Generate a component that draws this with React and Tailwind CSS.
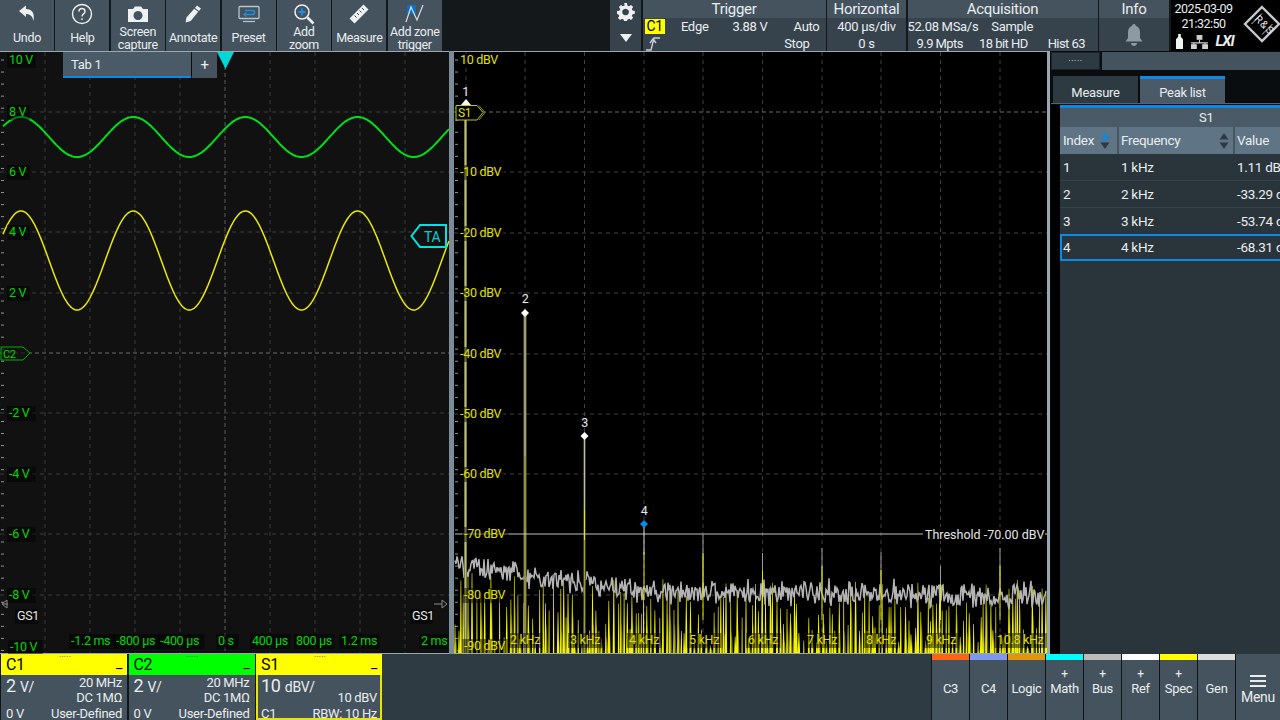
import React from "react";

function rng(seed) {
  let s = seed;
  return () => {
    s = (s * 1664525 + 1013904223) % 4294967296;
    return s / 4294967296;
  };
}

const sine = (cy, amp) => {
  const p = [];
  for (let x = 3; x <= 449; x += 1) {
    p.push(`${x},${(cy - amp * Math.cos(((x - 21) / 112.2) * 2 * Math.PI)).toFixed(1)}`);
  }
  return p.join(" ");
};

const peaks = [703, 762.5, 822, 881, 940.5, 1000];
const peakTop = { 703: 535, 762.5: 553, 822: 548, 881: 552, 940.5: 566, 1000: 548 };

function noiseLine() {
  const r = rng(11);
  const p = [];
  for (let x = 455; x <= 1046; x += 1) {
    const base = x < 650 ? 566 + ((x - 455) / 195) * 26 : 592 + ((x - 650) / 396) * 5;
    const spike = r() < 0.12 ? -9 * r() : 0;
    p.push(`${x.toFixed(1)},${(base + spike + (r() - 0.5) * 20 + (r() - 0.5) * 7).toFixed(1)}`);
  }
  return p.join(" ");
}

function yellowNoise() {
  const r = rng(77);
  let bright = "";
  let olive = "";
  for (let x = 455; x <= 1046; x += 1.8 + r() * 3.2) {
    const lim = x < 530 ? 92 : 68;
    const h = 8 + Math.pow(r(), 1.1) * lim;
    const t = (654 - h).toFixed(1);
    const w = 0.6 + r() * 0.7;
    bright += `M${(x - w).toFixed(1)} 654L${(x - 0.3).toFixed(1)} ${t}L${(x + 0.3).toFixed(1)} ${t}L${(x + w).toFixed(1)} 654Z`;
    if (r() < 0.55) {
      const h2 = h * (0.35 + r() * 0.45);
      olive += `M${(x - 1.5).toFixed(1)} 654L${(x + 1).toFixed(1)} ${(654 - h2).toFixed(1)}L${(x + 2.5).toFixed(1)} 654Z`;
    }
  }
  return { bright, olive };
}

const NOISE = noiseLine();
const YEL = yellowNoise();

function Btn({ children, label, second }) {
  return (
    <div className="flex h-[51px] w-[54px] shrink-0 flex-col items-center bg-[#45535e] text-[#e9edf0]">
      <div className="flex h-[26px] items-center justify-center pt-[1px]">{children}</div>
      <div className={`text-center text-[12.5px] leading-[12.5px] ${second ? "" : "pt-[6px]"}`}>
        {label}
        {second && <br />}
        {second}
      </div>
    </div>
  );
}

function TopButtons() {
  return (
    <div className="flex w-[441px] gap-[1.4px]">
      <Btn label="Undo">
        <svg width="20" height="20" viewBox="0 0 20 20"><path d="M2 7 L9 1.5 V5 C15 5 18 9 16.5 17 C15.5 12 13 10 9 10 V13 Z" fill="#eef1f3" /></svg>
      </Btn>
      <Btn label="Help">
        <svg width="22" height="22" viewBox="0 0 22 22" fill="none" stroke="#eef1f3" strokeWidth="1.4"><circle cx="11" cy="11" r="9.5" /><path d="M8 8.5c0-4 6-4 6 0 0 2.5-3 2.2-3 5" /><path d="M11 15.3v1.6" /></svg>
      </Btn>
      <Btn label="Screen" second="capture">
        <svg width="22" height="18" viewBox="0 0 22 18"><path fillRule="evenodd" d="M1 4h5l2-2.5h6L16 4h5v13H1ZM11 6a4.5 4.5 0 1 0 .01 0Z" fill="#eef1f3" /></svg>
      </Btn>
      <Btn label="Annotate">
        <svg width="20" height="20" viewBox="0 0 20 20"><path d="M14 1.5l4 3-2 2.5-4-3ZM11.2 4.8l4 3-7.5 9.2-5 1.5.6-4.8Z" fill="#eef1f3" /></svg>
      </Btn>
      <Btn label="Preset">
        <svg width="22" height="18" viewBox="0 0 22 18" fill="none"><rect x="1" y="1.5" width="20" height="12" rx="1" stroke="#b9c4cc" strokeWidth="1.3" /><path d="M5 16.5h12" stroke="#b9c4cc" strokeWidth="1.3" /><path d="M7 5.5h8c2 0 2 4 0 4H7" stroke="#1a8fe8" strokeWidth="1.6" /><path d="M8.5 7.5L6 9.5l2.5 2" stroke="#1a8fe8" strokeWidth="1.3" /></svg>
      </Btn>
      <Btn label="Add" second="zoom">
        <svg width="22" height="22" viewBox="0 0 22 22" fill="none"><circle cx="9" cy="9" r="7" stroke="#eef1f3" strokeWidth="1.5" /><path d="M9 5.5v7M5.5 9h7" stroke="#1a8fe8" strokeWidth="1.8" /><path d="M14.5 14.5l6 6" stroke="#eef1f3" strokeWidth="2.6" /></svg>
      </Btn>
      <Btn label="Measure">
        <svg width="22" height="22" viewBox="0 0 22 22"><path d="M15.5 1.5l5 5L6.5 20.5l-5-5Z" fill="#eef1f3" /><path d="M14 5l2 2M11.5 7.5l2 2M9 10l2 2M6.5 12.5l2 2" stroke="#45535e" strokeWidth="1" /></svg>
      </Btn>
      <Btn label="Add zone" second="trigger">
        <svg width="22" height="22" viewBox="0 0 22 22" fill="none"><rect x="3" y="2" width="9" height="9" fill="#0b6fc4" /><path d="M2 19L7 4l6 13 6-15" stroke="#d8dee2" strokeWidth="1.2" /></svg>
      </Btn>
    </div>
  );
}

function Section({ title, w, children }) {
  return (
    <div className={`flex h-[51px] shrink-0 flex-col bg-[#36434d] ${w}`}>
      <div className="flex h-[18px] shrink-0 items-center justify-center bg-[#45535e] pt-[1px] text-[15px] leading-none text-[#e9edf0]">{title}</div>
      <div className="relative min-h-0 flex-1 text-[13px] leading-[17px] text-[#e9edf0]">{children}</div>
    </div>
  );
}

function StatusBar() {
  return (
    <div className="flex gap-[1.5px]">
      <div className="flex h-[51px] w-[31px] shrink-0 flex-col items-center bg-[#36434d] pt-[3px]">
        <svg width="18" height="18" viewBox="0 0 18 18"><path fillRule="evenodd" d="M7.5 0h3l.4 2.5 1.8.8L14.8 2 17 4.2l-1.4 2 .8 1.8 2.4.4v3l-2.4.4-.8 1.8 1.4 2L14.8 18l-2.1-1.3-1.8.8-.4 2.4h-3l-.4-2.4-1.8-.8L3.2 18 1 15.8l1.4-2-.8-1.8L0 11.5v-3l2.6-.4.8-1.9L2 4.2 4.2 2l2 1.3 1.9-.8ZM9 6a3.5 3.5 0 1 0 .01 0Z" fill="#eef1f3" transform="scale(.95)" /></svg>
        <svg className="mt-[13px]" width="12" height="8" viewBox="0 0 12 8"><path d="M0 0h12L6 8Z" fill="#eef1f3" /></svg>
      </div>
      <Section title="Trigger" w="w-[183px]">
        <div className="flex h-[17px] items-center">
          <span className="ml-[2px] h-[15px] bg-[#ffff00] px-[2px] text-[14px] leading-[15px] text-black">C1</span>
          <span className="ml-[16px]">Edge</span>
          <span className="ml-[24px]">3.88 V</span>
          <span className="ml-[26px]">Auto</span>
        </div>
        <div className="flex h-[16px] justify-between pr-[16px]">
          <svg className="ml-[3px] mt-[1px]" width="14" height="15" viewBox="0 0 14 15" fill="none" stroke="#c9d1d7" strokeWidth="1.4"><path d="M0 14h5L8 2h6" /><path d="M4 7l3-4 3 4" /></svg>
          <span>Stop</span>
        </div>
      </Section>
      <Section title="Horizontal" w="w-[79px]">
        <div className="text-center">400 µs/div</div>
        <div className="text-center">0 s</div>
      </Section>
      <Section title="Acquisition" w="w-[190px]">
        <div className="flex h-[17px]">
          <span>52.08 MSa/s</span>
          <span className="ml-[13px]">Sample</span>
        </div>
        <div className="flex h-[16px] pl-[9px] tracking-[-0.55px]">
          <span>9.9 Mpts</span>
          <span className="ml-[16px]">18 bit HD</span>
          <span className="ml-[20px]">Hist 63</span>
        </div>
      </Section>
      <Section title="Info" w="w-[70px]">
        <div className="flex h-full items-center justify-center pt-[1px]">
          <svg width="18" height="22" viewBox="0 0 18 22"><path d="M9 0c1.2 0 1.7.8 1.7 1.8 3 .8 4.3 3.4 4.3 6.5V14l2.5 3.5H.5L3 14V8.300C3 5.200 4.300 2.600 7.300 1.800 7.300.8 7.800 0 9 0Z" fill="#8e9aa3" /><path d="M6 19h6c0 4-6 4-6 0Z" fill="#8e9aa3" /></svg>
        </div>
      </Section>
      <div className="relative h-[51px] flex-1 bg-black text-[12.5px] leading-[15px] tracking-[-0.5px] text-[#e9edf0]">
        <div className="w-[66px] pt-[1px] text-center">2025-03-09</div>
        <div className="w-[66px] text-center">21:32:50</div>
        <div className="flex items-center gap-[8px] pl-[5px] pt-[3px]">
          <svg width="7" height="15" viewBox="0 0 8 17"><path d="M2.5 0h3v3L8 6v11H0V6l2.5-3Z" fill="#f2f2f2" /></svg>
          <svg width="17" height="14" viewBox="0 0 18 15" fill="none" stroke="#d0d0d0" strokeWidth="1.2"><rect x="6.5" y=".5" width="5" height="4" fill="#d0d0d0" /><path d="M0 8.5h18M9 5v4M3 8v3M15 8v3" /><rect x=".5" y="10.5" width="5" height="4" fill="#d0d0d0" /><rect x="12.5" y="10.5" width="5" height="4" fill="#d0d0d0" /></svg>
          <span className="text-[15px] font-bold italic leading-none tracking-[-1px]">LXI</span>
        </div>
        <svg className="absolute right-[-1px] top-[5px]" width="38" height="38" viewBox="0 0 38 38" fill="none" stroke="#c4c8cb">
          <path d="M19 2 36 19 19 36 2 19Z" strokeWidth="2.4" />
          <path d="M8.5 19 19 8.5M19 29.5 29.5 19" strokeWidth="1" />
          <text fontSize="10.5" fill="#e8e8e8" stroke="none" textAnchor="middle" transform="translate(13 16.5) rotate(45)" fontFamily="Roboto, sans-serif">R</text>
          <text fontSize="10.5" fill="#e8e8e8" stroke="none" textAnchor="middle" transform="translate(18.5 22) rotate(45)" fontFamily="Roboto, sans-serif">&amp;</text>
          <text fontSize="10.5" fill="#e8e8e8" stroke="none" textAnchor="middle" transform="translate(24 27.5) rotate(45)" fontFamily="Roboto, sans-serif">S</text>
        </svg>
      </div>
    </div>
  );
}

function Ticks({ x }) {
  const t = [];
  for (let y = 60; y < 654; y += 12.05) t.push(y);
  return t.map((y) => <path key={y} d={`M${x} ${y}h3`} stroke="#8c979f" strokeWidth="1" />);
}

function Label({ x, y, children, color, w }) {
  const width = w ?? String(children).length * 5.9 + 5;
  return (
    <g>
      <rect x={x - 2} y={y - 11} width={width} height={15} fill="#000" fillOpacity="0.45" />
      <text x={x} y={y} fill={color} fontSize="12.5">{children}</text>
    </g>
  );
}

const G = "#00d800";

function LeftPlot() {
  const volts = [[64, "10 V", 9], [116, "8 V", 9], [176, "6 V", 9], [236, "4 V", 9], [297, "2 V", 9], [417, "-2 V", 9], [478, "-4 V", 9], [538, "-6 V", 9], [599, "-8 V", 9], [651, "-10 V", 10]];
  const times = [[71, "-1.2 ms"], [116, "-800 µs"], [160, "-400 µs"], [218, "0 s"], [252, "400 µs"], [296, "800 µs"], [341, "1.2 ms"], [421, "2 ms"]];
  return (
    <div className="relative h-[603px] w-[449px] shrink-0 border-t border-[#9aa7b0] bg-[#111111]">
      <svg className="block" width="449" height="602" viewBox="0 52 449 602" fontFamily="Roboto, sans-serif">
        {[45, 90, 135, 180, 270, 315, 360, 405].map((x) => (
          <path key={x} d={`M${x} 52V654`} stroke="#3c3c3c" strokeWidth="1" strokeDasharray="4 4" />
        ))}
        <path d="M225 52V654" stroke="#5c5c5c" strokeWidth="1" strokeDasharray="4 3" />
        {[112, 172, 232, 293, 413, 474, 534, 595].map((y) => (
          <path key={y} d={`M0 ${y}H449`} stroke="#3c3c3c" strokeWidth="1" strokeDasharray="4 4" />
        ))}
        <path d="M0 353H449" stroke="#6c6c6c" strokeWidth="1" strokeDasharray="4 3" />
        <path d="M0 653.5H449" stroke="#9aa7b0" strokeWidth="1" />
        <Ticks x={1} />
        <polyline points={sine(137, 20)} fill="none" stroke="#00e018" strokeWidth="2" />
        <polyline points={sine(260.5, 49.5)} fill="none" stroke="#eaea00" strokeWidth="1.5" />
        {volts.map(([y, t, x]) => <Label key={t} x={x} y={y} color={G}>{t}</Label>)}
        {times.map(([x, t]) => <Label key={t} x={x} y={645} color={G}>{t}</Label>)}
        <path d="M2 604h6M7 600l-5 4 5 4z" stroke="#8a8a8a" fill="none" />
        <path d="M434 604h8M442 600l5 4-5 4z" stroke="#8a8a8a" fill="none" />
        <Label x={17} y={620} color="#e6e6e6">GS1</Label>
        <Label x={412} y={620} color="#e6e6e6">GS1</Label>
        <path d="M1 347H23L30 353L23 360H1Z" fill="#111" fillOpacity=".7" stroke="#00b000" strokeWidth="1" />
        <text x="3" y="357.5" fontSize="11" fill={G}>C2</text>
        <path d="M446 225H420L411.5 236L420 247H446Z" fill="#111" stroke="#00e4e4" strokeWidth="2" />
        <text x="424" y="241.5" fontSize="14" fill="#00cfcf">TA</text>
        <path d="M217 52H234L225.5 69Z" fill="#00d8d8" />
      </svg>
      <div className="absolute left-[63px] top-0 flex h-[26px] bg-[#0a0c0e] text-[13px] text-[#e9edf0]">
        <div className="flex w-[128px] items-center border-b-[2px] border-[#0a8ae6] bg-[#4a5a66] pl-[8px] pt-[2px]">Tab 1</div>
        <div className="ml-px flex w-[25px] items-center justify-center bg-[#45535e] pt-[1px] text-[15px]">+</div>
      </div>
    </div>
  );
}

function RightPlot() {
  const dbv = [[64, "10 dBV", 460], [176, "-10 dBV", 460], [237, "-20 dBV", 460], [297, "-30 dBV", 460], [358, "-40 dBV", 460], [418, "-50 dBV", 460], [478, "-60 dBV", 460], [538, "-70 dBV", 464], [599, "-80 dBV", 464], [650, "-90 dBV", 464]];
  const freq = [[510, "2 kHz"], [570, "3 kHz"], [629, "4 kHz"], [689, "5 kHz"], [748, "6 kHz"], [807, "7 kHz"], [866, "8 kHz"], [926, "9 kHz"], [997, "10.8 kHz"]];
  const Y = "#e0e000";
  return (
    <div className="relative h-[603px] w-[596px] shrink-0 border-r-[3px] border-t border-[#9aa7b0] bg-black">
      <svg className="block" width="593" height="602" viewBox="454 52 593 602" fontFamily="Roboto, sans-serif">
        {[466, 525, 584.5, 644, 703, 762.5, 822, 881, 940.5, 1000].map((x) => (
          <path key={x} d={`M${x} 52V654`} stroke="#404040" strokeWidth="1" strokeDasharray="4 4" />
        ))}
        {[172, 233, 293, 354, 414, 474, 595].map((y) => (
          <path key={y} d={`M454 ${y}H1047`} stroke="#404040" strokeWidth="1" strokeDasharray="4 4" />
        ))}
        <path d="M454 112H1047" stroke="#6c6c6c" strokeWidth="1" strokeDasharray="4 3" />
        <Ticks x={455} />
        <path d={YEL.olive} fill="#5e5e10" />
        <path d={YEL.bright} fill="#f4f400" />
        <polyline points={NOISE} fill="none" stroke="#b4b4b4" strokeWidth="1.5" />
        <path d="M465.5 105V654" stroke="#7a7a4a" strokeWidth="3" />
        <path d="M465.5 105V654" stroke="#bcbc80" strokeWidth="1" />
        <path d="M525 313V654" stroke="#72724a" strokeWidth="3" />
        <path d="M525 313V456" stroke="#c4c4aa" strokeWidth="1" />
        <path d="M525 456V654" stroke="#b0b040" strokeWidth="1" />
        <path d="M584.5 436V654" stroke="#4e4e32" strokeWidth="2.5" />
        <path d="M584.5 436V510" stroke="#c0c0b0" strokeWidth="1" />
        <path d="M584.5 510V540" stroke="#e8e800" strokeWidth="1" />
        <path d="M584.5 540V654" stroke="#a0a030" strokeWidth="1" />
        <path d="M644 524V555" stroke="#d8d8d8" strokeWidth="1" />
        <path d="M644 552V600" stroke="#e8e800" strokeWidth="1" />
        {peaks.map((x) => (
          <g key={x}>
            <path d={`M${x} ${peakTop[x]}V590`} stroke="#9c9c9c" strokeWidth="1" />
            <path d={`M${x} ${peakTop[x] + 18}V620`} stroke="#e8e800" strokeWidth="1" />
          </g>
        ))}
        <path d="M455 534H1047" stroke="#c0c0c0" strokeWidth="1" />
        <rect x="923" y="527" width="122" height="14" fill="#000" />
        <text x="925" y="539" fill="#e4e4e4" fontSize="12.5" letterSpacing="0">Threshold -70.00 dBV</text>
        {dbv.map(([y, t, x]) => <Label key={t} x={x} y={y} color={Y}>{t}</Label>)}
        {freq.map(([x, t]) => <Label key={t} x={x} y={644} color={Y}>{t}</Label>)}
        <text x="465.5" y="96" fill="#e6e6e6" fontSize="12.5" textAnchor="middle">1</text>
        <path d="M461 105L466 99L471 105Z" fill="#fff" />
        <path d="M456 105.5H477L483 112.5L477 120H456Z" fill="#000" stroke="#c8c800" strokeWidth="1" />
        <path d="M479 105.5L485 112.5L479 120" fill="none" stroke="#8d8d20" strokeWidth="1" />
        <text x="458" y="117" fill={Y} fontSize="12">S1</text>
        <text x="525" y="303" fill="#e6e6e6" fontSize="12.5" textAnchor="middle">2</text>
        <path d="M525 309l4 4-4 4-4-4Z" fill="#fff" />
        <text x="584.5" y="427" fill="#e6e6e6" fontSize="12.5" textAnchor="middle">3</text>
        <path d="M584.5 432l4 4-4 4-4-4Z" fill="#fff" />
        <text x="644" y="515" fill="#e6e6e6" fontSize="12.5" textAnchor="middle">4</text>
        <path d="M644 520l4 4-4 4-4-4Z" fill="#0a8ae6" />
        <path d="M454 653.5H1047" stroke="#9aa7b0" strokeWidth="1" />
      </svg>
    </div>
  );
}

function Sort({ active }) {
  return (
    <svg width="10" height="18" viewBox="0 0 10 18">
      <path d="M5 1l4.5 6.5h-9Z" fill={active ? "#0a8ae6" : "#2e3a42"} />
      <path d="M5 17l4.5-6.5h-9Z" fill="#2e3a42" />
    </svg>
  );
}

function SidePanel() {
  const rows = [["1", "1 kHz", "1.11 dB"], ["2", "2 kHz", "-33.29 d"], ["3", "3 kHz", "-53.74 d"], ["4", "4 kHz", "-68.31 d"]];
  return (
    <div className="flex h-[603px] min-w-0 flex-1 flex-col overflow-hidden bg-[#0a0d0f] pl-[1px] text-[#e9edf0]">
      <div className="flex h-[19px] gap-[2px] pt-[1px]">
        <div className="flex w-[49px] items-center justify-center border border-[#1c2328] bg-[#2e3a42] pb-[6px] text-[9px] leading-none tracking-[0.5px]">.....</div>
        <div className="flex-1 bg-[#45535e]" />
      </div>
      <div className="mt-[6px] flex h-[28px] gap-[2px] border-b border-[#55636e] pl-[2px] text-[13px]">
        <div className="flex w-[85px] items-center justify-center bg-[#2e3a42] pt-[7px]">Measure</div>
        <div className="flex w-[85px] items-center justify-center border-t-[3px] border-[#0a8ae6] bg-[#4a5a66] pt-[4px]">Peak list</div>
      </div>
      <div className="flex min-w-0 flex-1 pt-[1px]">
        <div className="w-[9px] shrink-0 bg-black" />
        <div className="flex min-w-0 flex-1 flex-col overflow-hidden bg-[#2a343b] text-[13.5px]">
          <div className="flex h-[22px] items-center border-t-[3px] border-[#0a8ae6] bg-[#4a5a66] pl-[139px] text-[13px]">S1</div>
          <div className="grid h-[27px] grid-cols-[57px_116px_1fr] bg-[#5f7484] leading-[27px]">
            <div className="flex items-center justify-between pl-[3px]">Index<span className="mr-[7px] flex"><Sort active /></span></div>
            <div className="flex items-center justify-between border-l-2 border-[#46565f] pl-[2px]">Frequency<span className="mr-[4px] flex"><Sort /></span></div>
            <div className="border-l-2 border-[#46565f] pl-[2px]">Value</div>
          </div>
          {rows.map((r, i) =>
            i === 3 ? (
              <div key={r[0]} className="mt-[-1px] grid h-[27px] grid-cols-[58px_116px_1fr] border-2 border-r-0 border-[#0a8ae6] leading-[23px]">
                <div className="pl-[1px]">{r[0]}</div>
                <div className="pl-px">{r[1]}</div>
                <div className="pl-px">{r[2]}</div>
              </div>
            ) : (
              <div key={r[0]} className="grid h-[27px] grid-cols-[60px_116px_1fr] border-b border-[#35424b] leading-[27px]">
                <div className="pl-[3px]">{r[0]}</div>
                <div className="pl-px">{r[1]}</div>
                <div className="pl-px">{r[2]}</div>
              </div>
            )
          )}
        </div>
      </div>
    </div>
  );
}

function Card({ name, color, volts, unit, r1, r2, left, right, active }) {
  return (
    <div className="flex h-[66px] w-[126px] shrink-0 flex-col">
      <div className={`relative flex h-[21px] shrink-0 items-center pl-[5px] text-[16px] text-black ${color}`}>
        <span>{name}</span>
        <span className="absolute left-[58px] top-[-3px] text-[8px] leading-none tracking-[0.3px] text-[#333]">.....</span>
        <span className="absolute right-[5px] top-[-1px] text-[14px] leading-[20px]">_</span>
      </div>
      <div className={`min-h-0 flex-1 bg-[#45535e] text-[13px] leading-[15px] text-[#e9edf0] ${active ? "border-x-2 border-b-2 border-[#e6e600] pl-[3px] pr-[3px]" : "px-[5px]"}`}>
        <div className="flex h-[15px] justify-between">
          <span className="text-[18px] leading-[22px]">{volts} <span className="text-[14px]">{unit}</span></span>
          <span>{r1}</span>
        </div>
        <div className="h-[15px] text-right">{r2}</div>
        <div className="flex h-[15px] justify-between pt-px">
          <span>{left}</span>
          <span>{right}</span>
        </div>
      </div>
    </div>
  );
}

function TopTile({ color, plus, label }) {
  return (
    <div className="flex h-[66px] w-[37px] shrink-0 flex-col bg-[#45535e] text-[13px] leading-[15px] text-[#e9edf0]">
      <div className={`h-[6px] ${color}`} />
      <div className={`flex flex-1 flex-col items-center ${plus ? "pt-[7px]" : "pt-[21px]"}`}>
        {plus && <div className="h-[14px] text-[12px] leading-[14px]">+</div>}
        <div>{label}</div>
      </div>
    </div>
  );
}

function BottomBar() {
  return (
    <div className="flex h-[66px] bg-[#2f3b43]">
      <div className="flex w-[382px] shrink-0 gap-[1.5px] bg-[#11161a] pl-[1px]">
        <Card name="C1" color="bg-[#ffff00]" volts="2" unit="V/" r1="20 MHz" r2="DC 1MΩ" left="0 V" right="User-Defined" />
        <Card name="C2" color="bg-[#00ff00]" volts="2" unit="V/" r1="20 MHz" r2="DC 1MΩ" left="0 V" right="User-Defined" />
        <Card name="S1" color="bg-[#ffff00]" volts="10" unit="dBV/" r1="" r2="10 dBV" left="C1" right="RBW: 10 Hz" active />
      </div>
      <div className="flex-1" />
      <div className="flex gap-px bg-[#11161a] pl-px">
        <TopTile color="bg-[#ff6414]" label="C3" />
        <TopTile color="bg-[#7d98ee]" label="C4" />
        <TopTile color="bg-[#e09410]" label="Logic" />
        <TopTile color="bg-[#00ffff]" plus label="Math" />
        <TopTile color="bg-[#bcbcbc]" plus label="Bus" />
        <TopTile color="bg-[#ffffff]" plus label="Ref" />
        <TopTile color="bg-[#ffff00]" plus label="Spec" />
        <TopTile color="bg-[#dcdcdc]" label="Gen" />
        <div className="flex w-[44px] flex-col items-center justify-center bg-[#45535e] pt-[5px] text-[14px] leading-[16px] text-[#e9edf0]">
          <svg width="16" height="12" viewBox="0 0 16 12"><path d="M0 1h16M0 6h16M0 11h16" stroke="#e9edf0" strokeWidth="1.8" /></svg>
          <div className="mt-[2px]">Menu</div>
        </div>
      </div>
    </div>
  );
}

export default function App() {
  return (
    <div className="flex h-[720px] w-[1280px] flex-col overflow-hidden whitespace-nowrap bg-[#0c1013] font-['Roboto',sans-serif] tracking-[-0.3px]">
      <div className="flex h-[51px] shrink-0 justify-between bg-[#14181b]">
        <TopButtons />
        <div className="w-[670px]"><StatusBar /></div>
      </div>
      <div className="flex shrink-0">
        <LeftPlot />
        <div className="w-[5px] shrink-0 bg-[#7b8b97]" />
        <RightPlot />
        <SidePanel />
      </div>
      <BottomBar />
    </div>
  );
}
